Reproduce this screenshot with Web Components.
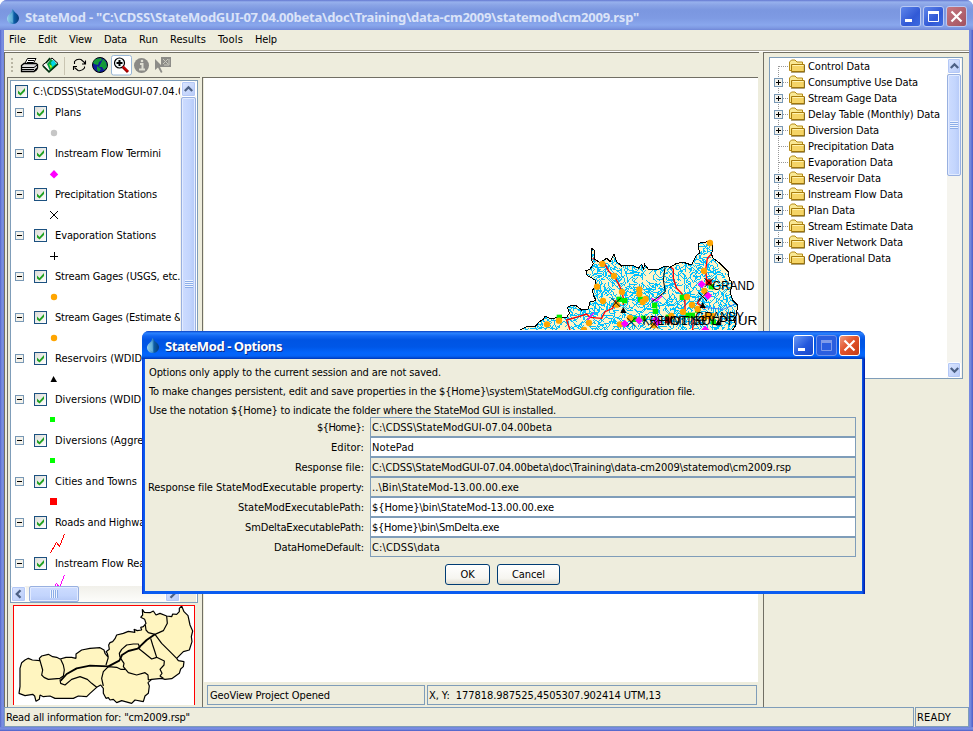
<!DOCTYPE html>
<html lang="en">
<head>
<meta charset="utf-8">
<title>StateMod</title>
<style>
html,body{margin:0;width:973px;height:731px;overflow:hidden;background:#fff}
</style>
</head>
<body>
<state-app></state-app>
<script>
const make = (name, html, after) => customElements.define(name, class extends HTMLElement {
  constructor() {
    super();
    this.attachShadow({mode: 'open'});
    this.drawn = false;
  }
  connectedCallback() {
    if (this.drawn) return;
    this.drawn = true;
    this.shadowRoot.innerHTML = typeof html === 'function' ? html(this) : html;
    if (after) after(this);
  }
});

/* One line of text, tracked to an exact width when w is given. */
make('ui-text', '<style>:host{display:inline-block;white-space:pre;letter-spacing:0}span{display:inline-block}</style><span><slot></slot></span>', el => {
  const w = +el.getAttribute('w');
  if (!w) { el.style.letterSpacing = '-0.12px'; return; }
  const s = el.shadowRoot.querySelector('span');
  const n = el.textContent.length;
  el.style.letterSpacing = ((w - s.getBoundingClientRect().width) / n).toFixed(4) + 'px';
});

make('drop-icon', `<style>:host{display:block;width:15px;height:17px}</style>
<svg width="15" height="17"><defs><linearGradient id="g"><stop offset="0" stop-color="#9fd4ee"/><stop offset=".42" stop-color="#4a97cc"/><stop offset=".62" stop-color="#0a5aa3"/><stop offset="1" stop-color="#073a78"/></linearGradient></defs>
<path d="M6.500 1Q8 3.500 11 6Q14 9 12.500 12.500Q10.500 16 7 16Q3 16 1.300 12.500Q0 9 3.500 6Q6 4 6.500 1Z" fill="url(#g)"/><path d="M6.500 4L2.500 9.500V12L7 15" fill="#79c4e4" opacity=".55"/></svg>`);

make('caption-button', el => {
  const k = el.getAttribute('kind'), dim = el.hasAttribute('dim'), off = el.hasAttribute('off');
  const bg = k === 'close' ? (dim ? 'linear-gradient(135deg,#c77780,#b0616d 60%,#a2525f)' : 'linear-gradient(135deg,#f09a80,#e2542c 45%,#c63c14)')
    : off ? '#2a5ee0' : (dim ? 'linear-gradient(135deg,#5f86ea,#3159d6 60%,#3c6be0)' : 'linear-gradient(135deg,#6c9af5,#2358dd 55%,#1848c9)');
  const line = off ? '#6f93ec' : dim ? '#b9c9f3' : '#fff', ink = off ? '#7f9bea' : '#fff';
  const g = {min: `<rect x="5" y="13" width="7" height="3" fill="${ink}"/>`,
    max: `<path d="M5.500 5.500h10v10h-10z" fill="none" stroke="${ink}"/><rect x="5" y="5" width="11" height="3" fill="${ink}"/>`,
    close: `<path d="M5.500 5.500L15.500 15.500M15.500 5.500L5.500 15.500" stroke="${ink}" stroke-width="2.200"/>`}[k];
  return `<style>:host{display:block;width:21px;height:21px;box-sizing:border-box;border:1px solid ${line};border-radius:3px;background:${bg}}svg{display:block;margin:-1px}</style><svg width="21" height="21">${g}</svg>`;
});

make('title-bar', el => {
  const a = el.hasAttribute('active');
  return `<style>:host{display:flex;box-sizing:border-box;height:${a ? 28 : 30}px;align-items:center;gap:2px;padding:${a ? '1px 5px 0 4px' : '3px 6px 0 6px'};border-radius:7px 7px 0 0;color:${a ? '#fff' : '#dae3f8'};
  background:${a ? 'linear-gradient(#0a3fc0 0,#2b83ff 2px,#1266f1 5px,#0054e3 9px,#0057e7 16px,#0365fc 22px,#0563f6 25px,#0047cf 27px,#0036b4 28px)' : 'linear-gradient(#6377d0 0,#97b1ed 2px,#8aa4e6 5px,#7b97e0 10px,#7e9ae3 18px,#89a7ed 25px,#7e99e2 28px,#7088d8 30px)'}}
  ui-text{font:bold 13px "Noto Sans","DejaVu Sans",sans-serif;flex:none;line-height:20px;margin-left:2px;${a ? 'text-shadow:1px 1px #0a2b8a' : ''}}i{flex:1}</style>
  <drop-icon></drop-icon><ui-text w="${el.getAttribute('w')}">${el.getAttribute('label')}</ui-text><i></i>
  <caption-button kind="min" ${a ? '' : 'dim'}></caption-button><caption-button kind="max" ${a ? 'off' : 'dim'}></caption-button><caption-button kind="close" ${a ? '' : 'dim'}></caption-button>`;
});

make('scroll-arrow', el => {
  const r = {up: 0, right: 90, down: 180, left: 270}[el.getAttribute('dir')];
  return `<style>:host{display:block;flex:none;box-sizing:border-box;width:15px;height:16px;border:1px solid #fff;border-radius:2px;background:linear-gradient(135deg,#dbe6ff,#b8cbf8);box-shadow:inset 0 0 0 1px #b4c8f6}svg{display:block;margin:0 auto;transform:rotate(${r}deg)}</style>
  <svg width="13" height="14"><path d="M2.800 9L6.500 5.300L10.200 9" fill="none" stroke="#4d6185" stroke-width="2.300"/></svg>`;
});

make('scroll-thumb', el => {
  const h = el.hasAttribute('horizontal');
  return `<style>:host{display:flex;flex:none;box-sizing:border-box;align-items:center;justify-content:center;border:1px solid #98b0e0;border-radius:2px;box-shadow:inset 0 0 0 1px #e2ebff;background:linear-gradient(${h ? '180deg' : '90deg'},#cddcff,#c3d5fd 60%,#b5c9f7)}
  i{display:block;width:8px;height:8px;background:repeating-linear-gradient(${h ? '90deg' : '180deg'},#eef4ff 0 1px,#8caee8 1px 2px)}</style><i></i>`;
});

make('check-box', `<style>:host{display:block;flex:none;box-sizing:border-box;width:13px;height:13px;border:1px solid #1c5180;background:linear-gradient(135deg,#dcdcd7,#fff)}svg{display:block}</style><svg width="11" height="11"><path d="M2 4.500L4.500 7L9 2V5L4.500 9.500L2 7.500Z" fill="#21a121"/></svg>`);

make('node-handle', el => `<style>:host{display:block;flex:none;width:9px;height:9px}svg{display:block}</style><svg width="9" height="9" shape-rendering="crispEdges"><rect x=".5" y=".5" width="8" height="8" fill="#f4f2eb" stroke="#7898b5"/><path d="M2 4.500h5${el.hasAttribute('plus') ? 'M4.500 2v5' : ''}" stroke="#000"/></svg>`);

const symbols = {
  gray: '<circle cx="10" cy="10" r="3.200" fill="#c6c6c6"/>',
  diamond: '<path d="M10 6L14.200 10.500L10 14.500L5.800 10.500Z" fill="#f0f"/>',
  cross: '<path d="M6 6L14 14M14 6L6 14" stroke="#000" shape-rendering="crispEdges"/>',
  plus: '<path d="M6 10.500H14M10.500 6V14" stroke="#000" shape-rendering="crispEdges"/>',
  orange: '<circle cx="10" cy="10" r="3.200" fill="#ffa500"/>',
  tri: '<path d="M9.500 7L13 13H6.500Z" fill="#000"/>',
  green: '<rect x="6" y="7" width="5" height="5" fill="#0f0"/>',
  red: '<rect x="6" y="6" width="7" height="7" fill="red"/>',
  road: '<path d="M6.500 20L12.500 9.500L15.500 13.500L20.500 1" fill="none" stroke="red" shape-rendering="crispEdges"/>',
  reach: '<path d="M6.500 20L12.500 9.500L15.500 13.500L20.500 1" fill="none" stroke="#f0f" shape-rendering="crispEdges"/>'
};
make('map-layer', el => `<style>:host{display:block;height:41px}div{display:flex;align-items:center;height:21px;padding-left:4px}check-box{margin:0 8px 0 10px}ui-text{flex:none}svg{display:block;margin-left:33px;height:20px;width:30px}</style>
<div><node-handle></node-handle><check-box></check-box><ui-text><slot></slot></ui-text></div><svg>${symbols[el.getAttribute('symbol')]}</svg>`, el => {
  const t = el.shadowRoot.querySelector('ui-text');
  t.style.letterSpacing = '0px';
  t.style.letterSpacing = ((+el.getAttribute('w') - t.getBoundingClientRect().width) / el.textContent.length) + 'px';
});

make('data-node', el => `<style>:host{display:flex;height:16px;align-items:center;padding-left:4px}
.h{display:flex;flex:none;width:14px;height:16px;align-items:center;margin-right:1px;background:repeating-linear-gradient(90deg,transparent 0 1px,#999 1px 2px) 4px 8px/10px 1px no-repeat,repeating-linear-gradient(#999 0 1px,transparent 1px 2px) 4px ${el.hasAttribute('first') ? '8px/1px 8px' : el.hasAttribute('last') ? '0/1px 8px' : '0/1px 16px'} no-repeat}
svg{display:block;flex:none;margin-right:3px}ui-text{flex:none}</style><span class="h">${el.hasAttribute('plus') ? '<node-handle plus></node-handle>' : ''}</span>
<svg width="16" height="16"><path d="M.5 12.500V4L2.500 2H6L8 4H13.500V12.500Z" fill="#f9e894" stroke="#b58b16"/><path d="M2.500 13.500V6.500H15.300V13.500Z" fill="#f5d466" stroke="#a87c0c"/><path d="M3.500 7.500H14.500" stroke="#fff3b0"/><path d="M2 14.300H15.500V7" fill="none" stroke="#6f5a1b" stroke-width=".7"/></svg><ui-text w="${el.getAttribute('w')}">${el.getAttribute('label')}</ui-text>`);

make('tool-bar', `<style>:host{display:flex;box-sizing:border-box;height:24px;align-items:center;padding-left:4px}svg{display:block}</style>
<svg width="170" height="24" viewBox="11 53 170 24">
<g fill="#b9b6a4"><rect x="11" y="58" width="2" height="2"/><rect x="11" y="62" width="2" height="2"/><rect x="11" y="66" width="2" height="2"/><rect x="11" y="70" width="2" height="2"/></g>
<path d="M64.500 57V75" stroke="#c9c5b2"/>
<path d="M24.500 64L27.500 58.500H36L33 64Z" fill="#fff" stroke="#000"/><path d="M28 60.500H34M27 62.500H33" stroke="#000"/><path d="M21.500 65.500L24 63.500H36L37.500 64.500V68L34 71.500H21.500Z" fill="#ddd" stroke="#000" stroke-width="1.300"/><path d="M22 67.500H34L37 65M22 69.500H34" stroke="#000" fill="none"/><path d="M35 71L37 68.500" stroke="#000" stroke-width="2"/>
<path d="M42.500 65L48 61L52 58L58 63.500L49 71.500Z" fill="#f4f4f4" stroke="#000"/><path d="M47 64L51 59L57 64L50 71Z" fill="#00a040"/><path d="M51 62L54 60L56 64L52 67Z" fill="#00d5e5"/><path d="M49 64L52 66L51 69Z" fill="#b4ff18"/><path d="M43 66L49 72L58 64M50 58L46 63" fill="none" stroke="#003010" stroke-width="1.500"/>
<g fill="none" stroke="#000" stroke-width="1.100"><path d="M74.500 64V61.500Q77 58.500 81 59.500L84.500 62.500V64.500M85.500 60.500V64H82"/><path d="M84.500 66.500V68Q82 71.500 78 70.500L74.500 67.500M73.500 70V66.500H77"/></g>
<circle cx="100" cy="65" r="7.500" fill="#101d9b" stroke="#000"/><path d="M96 59L101 58L102 60L99 62L98 65L94 64L93 62ZM103 59L106 62L107 67L104 70L102 67L99 67L101 63ZM97 66L101 69L99 72L97 70Z" fill="#139a38"/>
<rect x="111.500" y="55.500" width="20" height="19.500" rx="2" fill="#fff" stroke="#98b6d6"/><circle cx="119.500" cy="63" r="5" fill="#f3fcfc" stroke="#000" stroke-width="1.200"/><path d="M116.500 63H122.500M119.500 60V66" stroke="#000" stroke-width="2"/><path d="M123 67L128 72" stroke="#900" stroke-width="3"/><path d="M122.500 66L127.500 71" stroke="red"/>
<circle cx="141.500" cy="65.500" r="7.500" fill="#8a8a86"/><path d="M140 64H142.500V69M139 69.500H145" stroke="#deded2" stroke-width="2" fill="none"/><circle cx="142" cy="61" r="1.300" fill="#deded2"/>
<path d="M155 59V70L158 67.500L161 73L162.500 72L160 67H163Z" fill="#8d8d88"/><rect x="161" y="57" width="10" height="10" fill="#8d8d88"/><path d="M163 59L168 64M163 64L168 59M164 65H169V59" fill="none" stroke="#c8c8bd"/>
</svg>`);

const basin = 'M30 300L50 290H75L88 275L100 268L105 258L120 265L170 262L178 250L172 232L185 225L200 228L215 240L235 237L240 215L258 212L250 195L248 180L258 165L255 150L230 135L228 122L240 118L250 100L245 90V55L252 60L255 88L270 98L290 85L300 95L312 72L320 95L335 108L365 105L385 115L395 103L400 117L404 103L415 118L440 120L465 108L480 112L500 100L520 97L545 105L560 75L568 70L565 40L605 33L608 60L604 72L610 85L630 100L655 125L658 150L665 155V170L660 185L668 210L682 225L680 255L670 270L678 285L668 300Z';

/* Stream network: walks that step aside into a channel already taken are cut short, so tributaries join. Fixed seed. */
function streams() {
  let s = 77, d = '';
  const taken = new Set();
  const rnd = () => (s = (s * 1664525 + 1013904223) >>> 0) / 4294967296;
  const dirs = [[1,0],[1,1],[0,1],[-1,1],[-1,0],[-1,-1],[0,-1],[1,-1]];
  for (let i = 0; i < 2600; i++) {
    let x = 8 + Math.floor(rnd() * 224), y = 10 + Math.floor(rnd() * 92), k = Math.floor(rnd() * 8);
    if (taken.has(x + ',' + y)) continue;
    d += `M${x * 3 + 1.5} ${y * 3 + 1.5}`;
    for (let j = 0, n = 5 + rnd() * 11; j < n; j++) {
      if (rnd() < .4) k = (k + (rnd() < .5 ? 1 : 7)) % 8;
      x += dirs[k][0]; y += dirs[k][1];
      d += `L${x * 3 + 1.5} ${y * 3 + 1.5}`;
      if (taken.has(x + ',' + y)) break;
      taken.add(x + ',' + y);
    }
  }
  return d;
}
const dots = (list, f) => list.map(p => f(p[0], p[1])).join('');
make('basin-map', () => `<style>:host{display:block;overflow:hidden}svg{display:block;margin:152px 0 0 306px}text{font:39px "Liberation Sans",Arial,sans-serif}</style>
<svg width="260" height="100" viewBox="0 0 780 300"><clipPath id="c"><path d="${basin}"/></clipPath>
<path d="${basin}" fill="#fff5c8"/>
<g clip-path="url(#c)" fill="none" stroke-width="3"><path d="${streams()}" stroke="#00bfff" shape-rendering="crispEdges"/>
<g stroke="red" stroke-width="4"><path d="M248 85L262 92L285 103L297 125L312 138L325 160L336 185L340 205V225M318 210L308 235L285 245L275 265L240 262L230 252L205 260L170 270L180 300M478 108L490 118V145L500 175L515 190L525 215V250L550 262L548 300M606 70L592 85L587 120L590 150M570 205L562 220L585 235"/></g>
<g stroke="#f0f" stroke-width="4"><path d="M424 205L438 213L456 198M232 270L252 248M560 248L572 235"/></g>
<path d="M465 112L460 150L466 185L440 205L425 215" stroke="#000" stroke-width="3"/><path d="M580 232L640 238L680 220" stroke="#1e78ff" stroke-width="3"/></g>
<path d="${basin}" fill="none" stroke="#000" stroke-width="3" shape-rendering="crispEdges"/>
${dots([[148,262],[434,226],[328,208],[344,212],[392,208],[436,244],[400,265],[517,202],[534,256],[547,256],[563,240],[604,170],[610,276],[374,268],[475,262]], (x, y) => `<rect x="${x-8}" y="${y-8}" width="16" height="16" fill="#0e0"/>`)}
${dots([[111,283],[147,272],[237,279],[277,102],[312,138],[261,170],[279,213],[336,186],[388,178],[388,192],[407,207],[398,216],[320,224],[330,283],[360,264],[432,286],[484,258],[519,246],[531,201],[546,225],[563,237],[582,123],[583,183],[600,39],[582,264],[595,258],[607,258],[222,300]], (x, y) => `<circle cx="${x}" cy="${y}" r="9.500" fill="#ffa500"/>`)}
${dots([[344,281],[387,271],[437,269],[442,277],[575,163],[594,197],[586,299]], (x, y) => `<path d="M${x-12} ${y}L${x} ${y-12}L${x+12} ${y}L${x} ${y+12}Z" fill="#f0f"/>`)}
<rect x="587" y="148" width="18" height="18" fill="#d00"/><rect x="465" y="262" width="20" height="18" fill="#d00"/>
${dots([[318,218],[364,276],[597,158],[432,283],[578,200]], (x, y) => `<path d="M${x-13} ${y-13}L${x+13} ${y+13}M${x+13} ${y-13}L${x-13} ${y+13}" stroke="#000" stroke-width="3"/>`)}
${dots([[340,241],[578,226],[625,278]], (x, y) => `<path d="M${x-9} ${y+8}L${x} ${y-10}L${x+9} ${y+8}Z"/>`)}
<text x="607" y="180" textLength="126" lengthAdjust="spacingAndGlyphs">GRAND</text>
<text x="556" y="273" textLength="146" lengthAdjust="spacingAndGlyphs">GRANBY</text>
<text x="398" y="285" textLength="190" lengthAdjust="spacingAndGlyphs">KREMMLING</text>
<text x="450" y="285" textLength="292" lengthAdjust="spacingAndGlyphs">HOT SULPHUR</text>
</svg>`);

make('overview-map', `<style>:host{display:block;box-sizing:border-box;border:1px solid red;border-bottom:0;background:#fff;overflow:hidden}svg{display:block}</style>
<svg width="180" height="99" viewBox="42 108 540 297"><g fill="#fff5c0" stroke="#000" stroke-width="3.600" stroke-linejoin="bevel">
<path d="M57 370L60 350V295L65 278L75 270L85 265L97 270L120 272L118 265L125 258L145 253L158 260L170 262L180 267L198 262L215 262L228 265V252L245 240L270 235L300 233L312 240L315 250L325 262L322 250L318 245L328 238L326 225L330 218L338 215L345 206L350 195L370 190L385 184L405 187L402 178L412 182L425 180L422 172L430 170L438 160L434 148L422 142L428 135L427 118L433 127L450 128L460 123L468 135L480 130L500 138L515 140L518 132L530 133L538 125V115L545 108L552 125L564 137L570 165L578 183L574 200L576 215L568 240L550 245L530 265L535 272L552 275L550 290L542 297L538 310L515 326L495 328L485 325L455 328L444 338L448 348L445 370L435 378L430 395L405 390L395 400L365 392L350 398L340 388L330 390L325 383L318 385L310 370V355L302 345L290 352L270 370L260 380L235 378L220 385L165 385L150 378L130 380L120 375L118 388L108 394L104 378L98 373L75 377Z"/>
<g fill="none"><path d="M120 272L128 300L125 315L132 322L145 328L180 325L190 318L193 300L190 285L182 268M325 262L318 285M360 262L358 250L365 238L380 225L400 222L415 222L420 235M500 138L502 160L490 182L465 193L445 188L438 180L436 165M415 235L432 248L455 267L470 262L493 273L492 285L480 298L486 310L480 318L490 325M470 262L463 240L458 225L452 205M465 193L485 220L510 245L530 265M362 265L372 280L370 290L385 308L410 315L435 308L444 315L445 330L455 328M325 290L310 305L305 325L310 348M325 290L350 292L362 298L375 298M180 328L182 340L195 345L215 328L240 320L262 328L275 340L290 352"/><path d="M182 332L200 312L230 295L270 287L325 289L358 272L366 255L385 243L413 236L440 210L465 193" stroke-width="5.500"/></g></g></svg>`);

make('option-row', el => {
  const ro = el.hasAttribute('readonly');
  return `<style>:host{display:grid;grid-template-columns:215px 486px;column-gap:6px;height:20px;align-items:center}.l{justify-self:end}
  .f{box-sizing:border-box;height:20px;display:flex;align-items:center;border:1px solid #7f9db9;padding-left:1px;background:${ro ? '#eeeddd' : '#fff'}}ui-text{flex:none}</style>
  <ui-text class="l" w="${el.getAttribute('lw')}">${el.getAttribute('label')}</ui-text><div class="f"><ui-text w="${el.getAttribute('w')}">${el.getAttribute('value')}</ui-text></div>`;
});

make('push-button', `<style>:host{box-sizing:border-box;display:flex;align-items:center;justify-content:center;height:21px;border:1px solid #003c74;border-radius:3px;background:linear-gradient(#fff,#f6f5f0 70%,#e0ddd0)}</style><slot></slot>`);

make('options-dialog', `<style>:host{display:flex;flex-direction:column;box-sizing:border-box;width:723px;height:263px;border-radius:7px 7px 0 0;background:linear-gradient(90deg,#0831d9,#0a5cf0 2px,#0a5cf0 720px,#0019a5)}
main{flex:1;margin:0 3px 3px;background:#eeeddd;padding:4px 4px 0}
.p{height:19px;display:flex;align-items:center}.rows{display:grid;margin-top:-3px}footer{display:flex;gap:7px;justify-content:flex-start;margin:7px 0 0 296px}</style>
<title-bar active label="StateMod - Options" w="117"></title-bar>
<main>
<div class="p"><ui-text w="292">Options only apply to the current session and are not saved.</ui-text></div>
<div class="p"><ui-text w="546">To make changes persistent, edit and save properties in the \${Home}\\system\\StateModGUI.cfg configuration file.</ui-text></div>
<div class="p"><ui-text w="407">Use the notation \${Home} to indicate the folder where the StateMod GUI is installed.</ui-text></div>
<div class="rows">
<option-row readonly label="\${Home}:" lw="47" value="C:\\CDSS\\StateModGUI-07.04.00beta" w="180"></option-row>
<option-row label="Editor:" lw="33" value="NotePad" w="42"></option-row>
<option-row readonly label="Response file:" lw="69" value="C:\\CDSS\\StateModGUI-07.04.00beta\\doc\\Training\\data-cm2009\\statemod\\cm2009.rsp" w="419"></option-row>
<option-row readonly label="Response file StateModExecutable property:" lw="216" value="..\\Bin\\StateMod-13.00.00.exe" w="147"></option-row>
<option-row label="StateModExecutablePath:" lw="126" value="\${Home}\\bin\\StateMod-13.00.00.exe" w="182"></option-row>
<option-row label="SmDeltaExecutablePath:" lw="119" value="\${Home}\\bin\\SmDelta.exe" w="127"></option-row>
<option-row readonly label="DataHomeDefault:" lw="90" value="C:\\CDSS\\data" w="68"></option-row>
</div>
<footer><push-button style="width:45px"><ui-text w="14">OK</ui-text></push-button><push-button style="width:63px"><ui-text w="33">Cancel</ui-text></push-button></footer>
</main>`);

const layers = [['Plans','gray',26],['Instream Flow Termini','diamond',106],['Precipitation Stations','cross',102],['Evaporation Stations','plus',101],['Stream Gages (USGS, etc.)','orange',129],['Stream Gages (Estimate &amp; Other)','orange',160],['Reservoirs (WDID)','tri',91],['Diversions (WDID)','green',90],['Diversions (Aggregated)','green',121],['Cities and Towns','red',82],['Roads and Highways','road',101],['Instream Flow Reaches','reach',113]];
const nodes = [['Control Data',0,62],['Consumptive Use Data',1,110],['Stream Gage Data',1,89],['Delay Table (Monthly) Data',1,132],['Diversion Data',1,71],['Precipitation Data',0,86],['Evaporation Data',0,85],['Reservoir Data',1,73],['Instream Flow Data',1,95],['Plan Data',1,47],['Stream Estimate Data',1,105],['River Network Data',1,95],['Operational Data',1,83]];

make('layer-panel', `<style>:host{display:grid;grid-template-rows:523px 2px 100px;box-sizing:border-box;width:193px;border-left:1px solid #716f64;border-top:1px solid #716f64;padding:2px 0 0 2px;background:#eeeddd}
.box{display:grid;grid-template:505px 16px/169px 16px;box-sizing:border-box;width:188px;height:523px;border:1px solid #7f9db9;background:#fff}
.list{overflow:hidden}.root{display:flex;align-items:center;height:21px;padding-left:4px;gap:5px}.root ui-text{flex:none}
.v{display:flex;flex-direction:column;background:#f5f4ee;padding-left:1px}.v scroll-thumb{height:373px;width:15px}.h{display:flex;background:linear-gradient(#f1f0ea,#fdfdfb)}.h scroll-thumb{width:50px;height:16px;margin-left:3px}.h b{flex:1}.c{background:#eeeddd}
overview-map{width:182px;height:100px;margin-left:3px;grid-row:3}</style>
<div class="box"><div class="list"><div class="root"><check-box></check-box><ui-text w="180">C:\\CDSS\\StateModGUI-07.04.00beta</ui-text></div>
${layers.map(l => `<map-layer symbol="${l[1]}" w="${l[2]}">${l[0]}</map-layer>`).join('')}</div>
<div class="v"><scroll-arrow dir="up"></scroll-arrow><scroll-thumb></scroll-thumb></div>
<div class="h"><scroll-arrow dir="left"></scroll-arrow><scroll-thumb horizontal></scroll-thumb><b></b><scroll-arrow dir="right"></scroll-arrow></div><div class="c"></div></div>
<overview-map></overview-map>`);

make('map-panel', `<style>:host{display:flex;flex-direction:column;box-sizing:border-box;width:556px;border-top:1px solid #716f64;border-left:1px solid #716f64;background:#fff}
basin-map{flex:1;border-left:1px solid #eeeddd}.s{display:flex;height:25px;gap:2px;padding:3px 1px 0 4px;background:#eeeddd;box-sizing:border-box}.s div{box-sizing:border-box;height:20px;border:1px solid #7f9db9;display:flex;align-items:center;padding-left:2px}</style>
<basin-map></basin-map><div class="s"><div style="width:218px"><ui-text w="120">GeoView Project Opened</ui-text></div><div style="width:330px;padding-left:1px"><ui-text w="232">X, Y:  177818.987525,4505307.902414 UTM,13</ui-text></div></div>`);

make('data-panel', `<style>:host{display:block;box-sizing:border-box;width:206px;border-left:1px solid #716f64;border-top:1px solid #716f64;padding:4px 5px;background:#eeeddd}
.box{display:grid;grid-template-columns:177px 15px;box-sizing:border-box;width:194px;height:322px;border:1px solid #7f9db9;background:#fff}.v{display:flex;flex-direction:column;background:#f5f4ee}.v scroll-arrow{width:14px}.v scroll-thumb{width:14px;height:102px}.v b{flex:1}</style>
<div class="box"><div>${nodes.map((n, i) => `<data-node label="${n[0]}" w="${n[2]}" ${n[1] ? 'plus' : ''} ${i ? '' : 'first'} ${i === 12 ? 'last' : ''}></data-node>`).join('')}</div>
<div class="v"><scroll-arrow dir="up"></scroll-arrow><scroll-thumb></scroll-thumb><b></b><scroll-arrow dir="down"></scroll-arrow></div></div>`);

make('menu-bar', `<style>:host{display:flex;align-items:center;box-sizing:border-box;height:21px;padding:0 0 1px 5px;gap:12px;border-bottom:1px solid #aca899;background:#eeeddd}</style>
${[['File',17],['Edit',19],['View',23],['Data',23],['Run',19],['Results',36],['Tools',25],['Help',22]].map(m => `<ui-text w="${m[1]}">${m[0]}</ui-text>`).join('')}`);

make('state-app', `<style>:host{display:block;position:relative;width:973px;height:731px;font:11px/13px "DejaVu Sans Condensed","DejaVu Sans",sans-serif;color:#000}
.win{display:flex;flex-direction:column;box-sizing:border-box;width:973px;height:731px;border-radius:7px 7px 0 0;background:linear-gradient(90deg,#5464cb 0,#7b91e2 2px,#7184dc 4px,#7184dc 969px,#7b91e2 970px,#4c5cc6 973px)}
.body{margin:0 4px;flex:1;display:flex;flex-direction:column;background:#eeeddd}
.main{display:grid;grid-template-columns:755px 4px 206px;height:656px;border-top:1px solid #fff;box-sizing:border-box}
.left{border-left:1px solid #716f64;border-top:1px solid #716f64;padding-left:2px}.panes{display:grid;grid-template-columns:193px 2px 556px;height:630px}
.status{display:flex;height:20px;gap:1px;box-sizing:border-box}.status div{box-sizing:border-box;border:1px solid #7f9db9;display:flex;align-items:center;padding-left:1px}.status div:first-child{flex:1}.status div:last-child{width:54px}
.edge{height:4px;background:linear-gradient(#7184dc,#7b91e2 50%,#4c5cc6)}
options-dialog{position:absolute;left:142px;top:331px}</style>
<div class="win"><title-bar label='StateMod - "C:\\CDSS\\StateModGUI-07.04.00beta\\doc\\Training\\data-cm2009\\statemod\\cm2009.rsp"' w="614"></title-bar>
<div class="body"><menu-bar></menu-bar><div class="main"><div class="left"><tool-bar></tool-bar><div class="panes"><layer-panel></layer-panel><i></i><map-panel></map-panel></div></div><i></i><data-panel></data-panel></div>
<div class="status"><div><ui-text w="184">Read all information for: "cm2009.rsp"</ui-text></div><div><ui-text w="34">READY</ui-text></div></div></div><div class="edge"></div></div>
<options-dialog></options-dialog>`);
</script>
</body>
</html>
